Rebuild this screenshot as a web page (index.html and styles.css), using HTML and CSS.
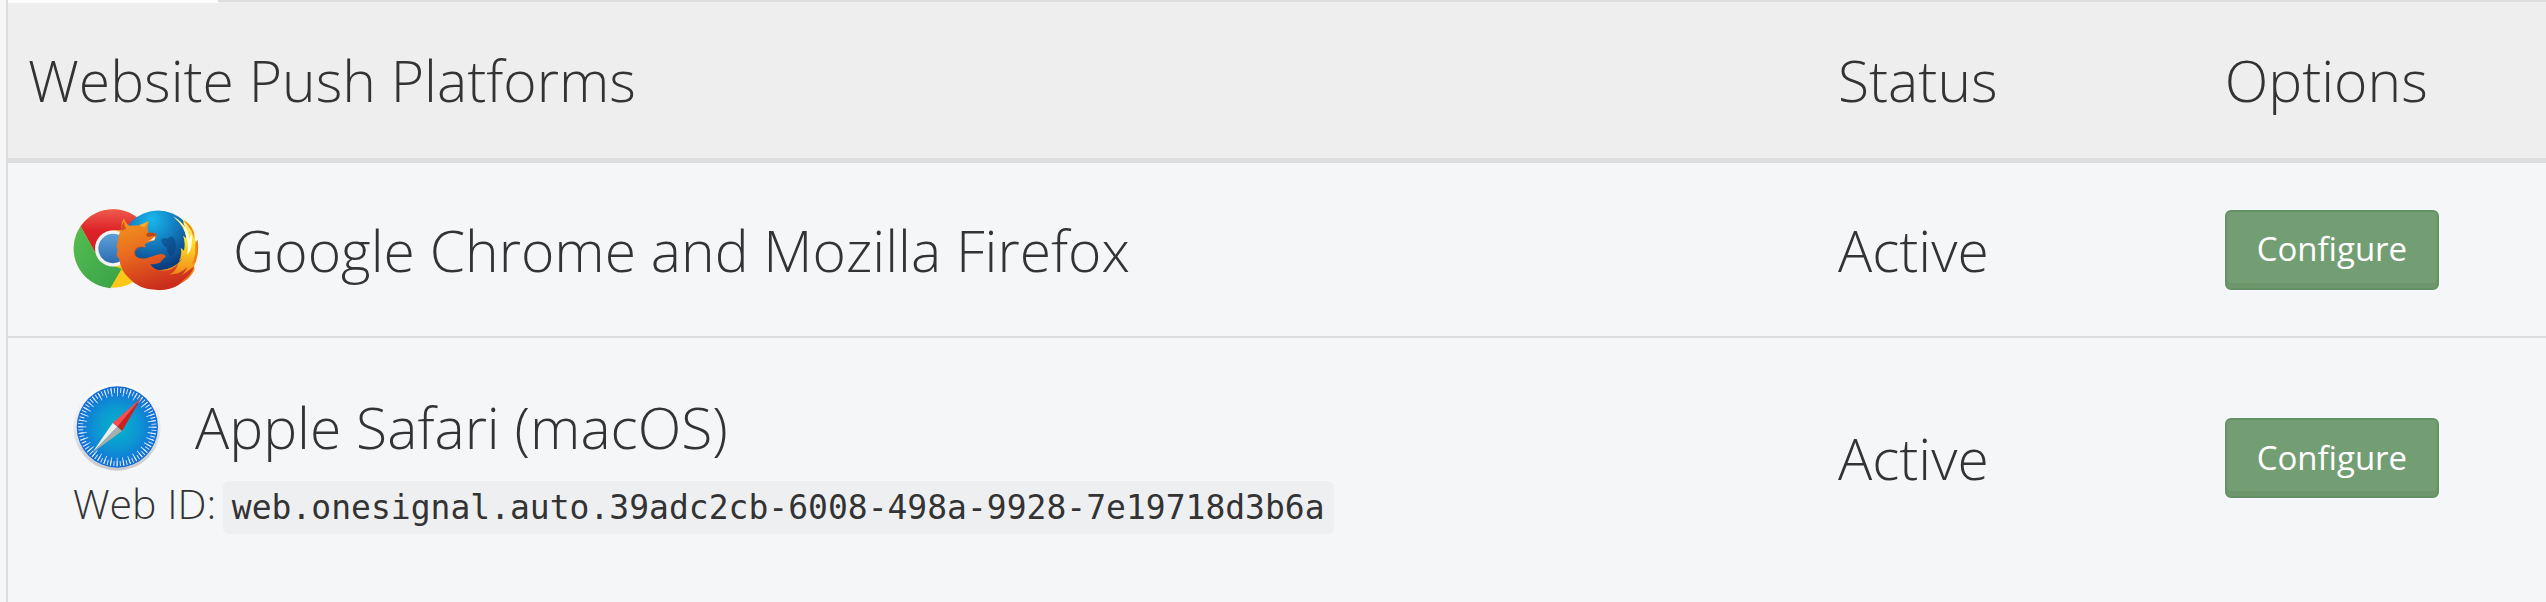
FILE: index.html
```html
<!DOCTYPE html>
<html lang="en">
<head>
<meta charset="utf-8">
<title>Website Push Platforms</title>
<link rel="stylesheet" href="styles.css">
</head>
<body>
<main class="panel">
  <div class="tab-strip">
    <div class="tab-active"></div>
    <div class="tab-line"></div>
  </div>
  <table class="platforms">
    <colgroup><col class="col-name"><col class="col-status"><col class="col-options"></colgroup>
    <thead>
      <tr><th scope="col">Website Push Platforms</th><th scope="col">Status</th><th scope="col">Options</th></tr>
    </thead>
    <tbody>
      <tr>
        <td class="name-cell">
          <div class="platform">
            <svg class="icon-pair" viewBox="38 53 378 248" aria-hidden="true">
              <defs>
                <linearGradient id="cr" x1="0" y1="0" x2="0" y2="1"><stop offset="0" stop-color="#ee5a4e"/><stop offset=".5" stop-color="#dd2227"/><stop offset="1" stop-color="#cf1f26"/></linearGradient>
                <linearGradient id="cg" x1="0" y1="0" x2="1" y2="1"><stop offset="0" stop-color="#55bd50"/><stop offset="1" stop-color="#39a248"/></linearGradient>
                <linearGradient id="cb" x1="0" y1="0" x2="0" y2="1"><stop offset="0" stop-color="#5ea1d8"/><stop offset="1" stop-color="#2b6cb2"/></linearGradient>
                <radialGradient id="globe" cx=".42" cy=".12" r=".85"><stop offset="0" stop-color="#19b8ec"/><stop offset=".4" stop-color="#1279bd"/><stop offset=".75" stop-color="#0c3f80"/><stop offset="1" stop-color="#0a2d63"/></radialGradient>
                <linearGradient id="fox" x1=".2" y1="0" x2=".5" y2="1"><stop offset="0" stop-color="#f0941f"/><stop offset=".45" stop-color="#ea6a1e"/><stop offset="1" stop-color="#c92b1c"/></linearGradient>
                <linearGradient id="tail" x1="0" y1="0" x2="0" y2="1"><stop offset="0" stop-color="#fff3a0"/><stop offset=".35" stop-color="#fde127"/><stop offset=".7" stop-color="#f59a1c"/><stop offset="1" stop-color="#dd4a1b"/></linearGradient>
              </defs>
              <circle cx="158" cy="174" r="118" fill="#fbc81a"/>
              <path d="M61 107A119 119 0 0 1 262 117L158 120 105 187Z" fill="url(#cr)"/>
              <path d="M61 107A119 119 0 0 0 150 293L184 235 158 226 105 187Z" fill="url(#cg)"/>
              <path d="M150 120H260L245 132H155Z" fill="#f0a51d"/>
              <circle cx="158" cy="174" r="54" fill="#f1f3f4"/>
              <circle cx="158" cy="174" r="44" fill="url(#cb)"/>
              <circle cx="293" cy="174" r="114" fill="url(#globe)"/>
              <path d="M302 148Q312 140 322 144Q330 134 340 142Q350 160 344 182Q340 196 330 196Q318 186 320 172Q308 168 302 148Z" fill="#0b3a76" opacity=".5"/>
              <path d="M338 78Q362 90 374 110Q366 92 370 84Q393 99 402 126Q405 138 405 158L412 148Q418 196 401 228L403 238Q389 265 365 277Q338 298 298 299L250 285 270 236Q330 250 366 205L356 212Q366 192 361 172L371 181Q376 152 368 136L378 143Q374 108 338 78Z" fill="url(#tail)"/>
              <path d="M366 101Q386 118 386 145L393 130Q399 151 390 180L381 193Q388 155 366 101Z" fill="#fffce0"/>
              <path d="M370 90Q390 99 400 124L402 145 393 121 382 105Z" fill="#e9861c"/>
              <path d="M405 159L412 148Q417 188 404 215L395 222 405 190Z" fill="#ee7f1d"/>
              <path d="M191 83Q194 96 207 106L240 104Q256 99 266 92Q259 112 264 126L285 128 289 136 283 149 263 156 253 162 257 170Q243 166 230 172Q218 181 225 196Q235 207 258 203Q278 197 293 192Q312 188 317 198Q307 205 300 216Q285 223 270 221Q281 241 314 240Q336 239 354 219Q345 246 326 253L354 248Q369 242 382 229Q370 251 361 257L402 227Q391 255 373 265Q342 303 286 298Q235 297 205 262Q182 242 176 204L169 196 172 179 169 167 175 137Q178 123 184 115Q180 99 191 83Z" fill="url(#fox)"/>
              <path d="M264 92L252 110 236 104Z" fill="#f4b228"/>
              <path d="M258 154Q272 149 285 137L282 149 268 151Z" fill="#fff1df"/>
              <path d="M264 126L285 128 289 136 270 138Q258 141 257 132Z" fill="#b9481b"/>
              <path d="M257 170Q230 164 222 184Q222 204 249 207Q240 202 234 203Q224 196 225 184Q232 168 257 170Z" fill="#c9461b"/>
              <path d="M192 92Q190 105 198 115L184 121Q181 104 192 92Z" fill="#d2501d"/>
            </svg>
            <span>Google Chrome and Mozilla Firefox</span>
          </div>
        </td>
        <td>Active</td>
        <td><button class="btn" type="button">Configure</button></td>
      </tr>
      <tr>
        <td class="name-cell">
          <div class="platform">
            <svg class="icon-safari" viewBox="38 37 264 264" aria-hidden="true">
              <defs>
                <linearGradient id="rim" x1="0" y1="0" x2="0" y2="1"><stop offset="0" stop-color="#fdfdfd"/><stop offset=".5" stop-color="#e8e8ea"/><stop offset="1" stop-color="#c8c9cb"/></linearGradient>
                <radialGradient id="dial"><stop offset="0" stop-color="#04b3cb"/><stop offset=".5" stop-color="#0c98d2"/><stop offset="1" stop-color="#156bd8"/></radialGradient>
              </defs>
              <circle cx="170" cy="169" r="131" fill="url(#rim)"/>
              <circle cx="171" cy="169" r="122" fill="url(#dial)"/>
              <circle cx="171" cy="169" r="110" fill="none" stroke="#d8edfa" stroke-width="15" pathLength="720" stroke-dasharray="3 7" stroke-dashoffset="1"/>
              <circle cx="171" cy="169" r="105" fill="none" stroke="#d8edfa" stroke-width="25" pathLength="720" stroke-dasharray="3 17" stroke-dashoffset="1"/>
              <path d="M243 82L157 157 171 168Z" fill="#fb4b4d"/>
              <path d="M243 82L185 181 171 168Z" fill="#d01f1b"/>
              <path d="M95 247L157 157 171 168Z" fill="#eceeee"/>
              <path d="M95 247L185 181 171 168Z" fill="#a9adae"/>
            </svg>
            <span>Apple Safari (macOS)</span>
          </div>
          <div class="web-id">Web ID: <code>web.onesignal.auto.39adc2cb-6008-498a-9928-7e19718d3b6a</code></div>
        </td>
        <td>Active</td>
        <td><button class="btn" type="button">Configure</button></td>
      </tr>
    </tbody>
  </table>
</main>
</body>
</html>
```
FILE: styles.css
```css
* { box-sizing: border-box; }
body {
  margin: 0;
  padding-left: 6px;
  background: #f5f6f8;
  color: #333;
  font-family: "Open Sans", "Noto Sans", sans-serif;
  font-weight: 300;
}
.panel { min-height: 100vh; border-left: 2px solid #ddd; }
.tab-strip { display: flex; height: 3px; background: #eee; }
.tab-active { width: 210px; background: #fff; }
.tab-line { flex: 1; height: 2px; background: #ddd; }
.platforms {
  width: 100%;
  table-layout: fixed;
  border-collapse: separate;
  border-spacing: 0;
  font-size: 57px;
  line-height: 80px;
}
.col-name { width: 71%; }
.col-status { width: 15%; }
th {
  padding: 37px 20px 38px;
  background: #eee;
  border-bottom: 5px solid #ddd;
  font-weight: 300;
  text-align: left;
}
td { padding: 45px 28px; vertical-align: middle; }
th + th { padding-left: 28px; }
th:last-child, td:last-child { padding-left: 34px; }
tbody tr + tr td { border-top: 2px solid #ddd; }
.name-cell { padding-left: 65px; }
tbody tr + tr .name-cell { padding-bottom: 38px; }
.platform { display: flex; align-items: center; gap: 34px; }
.icon-pair { width: 126px; height: 83px; flex: none; }
.icon-safari { width: 88px; height: 88px; flex: none; }
.web-id { font-size: 41px; line-height: 64px; white-space: nowrap; }
code {
  padding: 7px 9px;
  margin-left: -4px;
  border-radius: 6px;
  background: #eeeff1;
  font-family: Consolas, "DejaVu Sans Mono", monospace;
  font-size: 33px;
  font-weight: 400;
}
.btn {
  display: block;
  height: 80px;
  padding: 0 30px 2px;
  border: 2px solid #649264;
  border-radius: 6px;
  background: #739e73;
  box-shadow: inset 0 -5px #6d966c;
  color: #fff;
  font-family: inherit;
  font-size: 33px;
  font-weight: 400;
}
```
